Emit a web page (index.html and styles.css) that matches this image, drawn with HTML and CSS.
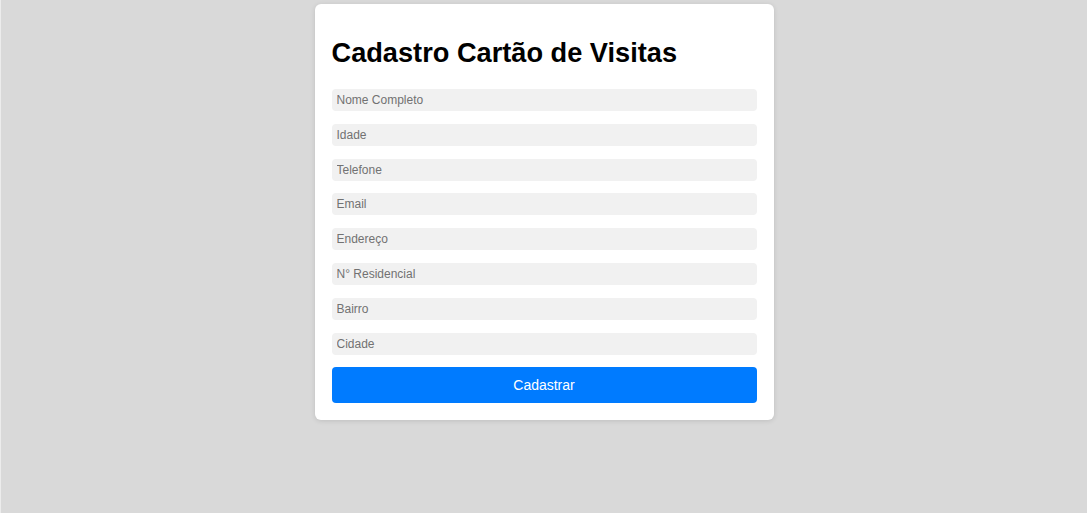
FILE: index.html
```html
<!DOCTYPE html>
<html lang="pt-BR">
<head>
<meta charset="utf-8">
<title>Cadastro Cartão de Visitas</title>
<link rel="stylesheet" href="styles.css">
</head>
<body>
<div class="page">
  <form class="card">
    <h1 class="title">Cadastro Cartão de Visitas</h1>
    <input class="field" type="text" placeholder="Nome Completo">
    <input class="field" type="text" placeholder="Idade">
    <input class="field" type="text" placeholder="Telefone">
    <input class="field" type="text" placeholder="Email">
    <input class="field" type="text" placeholder="Endereço">
    <input class="field" type="text" placeholder="N° Residencial">
    <input class="field" type="text" placeholder="Bairro">
    <input class="field" type="text" placeholder="Cidade">
    <button class="submit" type="button">Cadastrar</button>
  </form>
</div>
</body>
</html>
```
FILE: styles.css
```css
html, body {
  margin: 0;
  height: 100%;
}
body {
  background: #d9d9d9;
  font-family: "Liberation Sans", Arial, sans-serif;
}
.page {
  box-sizing: border-box;
  min-height: 100%;
  border-left: 1px solid #ececec;
  display: flex;
  justify-content: center;
  align-items: flex-start;
  padding-top: 4px;
}
.card {
  box-sizing: border-box;
  width: 459px;
  background: #ffffff;
  border-radius: 6px;
  box-shadow: 0 1px 5px rgba(0, 0, 0, 0.12);
  padding: 17px 17px 17px;
  display: flex;
  flex-direction: column;
  gap: 12.86px;
}
.title {
  margin: 16px 0 7px;
  font-size: 27.2px;
  line-height: 32px;
  font-weight: bold;
  color: #000;
}
.field {
  box-sizing: border-box;
  height: 22px;
  border: none;
  border-radius: 4px;
  background: #f1f1f1;
  padding: 0 5px;
  font-family: "Liberation Sans", Arial, sans-serif;
  font-size: 12px;
  color: #333;
  outline: none;
}
.field::placeholder {
  color: #727272;
  opacity: 1;
}
.submit {
  margin-top: -1px;
  height: 36px;
  border: none;
  border-radius: 4px;
  background: #007bff;
  color: #ffffff;
  font-family: "Liberation Sans", Arial, sans-serif;
  font-size: 14px;
  cursor: pointer;
}
```
